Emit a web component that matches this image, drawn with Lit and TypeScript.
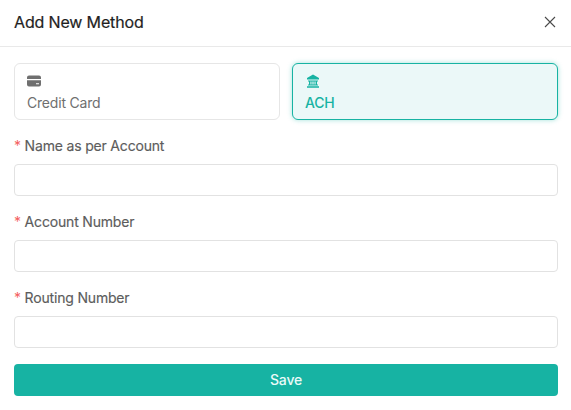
import { LitElement, html, css } from "lit";
import { customElement } from "lit/decorators.js";

@customElement("app-root")
export class AppRoot extends LitElement {
  static styles = css`
    :host {
      display: block;
      width: 571px;
      height: 410px;
      background: #fff;
      font-family: Inter, "Liberation Sans", sans-serif;
      box-sizing: border-box;
    }
    .header {
      height: 47px;
      box-sizing: border-box;
      border-bottom: 1px solid #e9e9e9;
      padding: 0 14px 3px;
      display: flex;
      align-items: center;
      justify-content: space-between;
    }
    .title { font-size: 16px; font-weight: 400; color: #1f1f1f; letter-spacing: -0.15px; -webkit-text-stroke: 0.2px #1f1f1f; }
    .close { width: 14px; height: 14px; color: #4a4a4a; display: block; margin-top: 1px; }
    .body { padding: 16px 13px 0 14px; display: flex; flex-direction: column; }
    .methods { display: grid; grid-template-columns: 1fr 1fr; gap: 12px; margin-bottom: 15px; }
    .method {
      height: 57px;
      box-sizing: border-box;
      border: 1px solid #e6e6e6;
      border-radius: 6px;
      padding: 10px 12px 0;
      color: #6f6f6f;
      font-size: 14px;
      line-height: 20px;
      letter-spacing: -0.2px;
    }
    .method.active {
      border-color: #17b3a3;
      background: #ebf8f8;
      color: #17b3a3;
      font-weight: 500;
      box-shadow: 0 0 5px rgba(23, 179, 163, 0.4);
    }
    .method svg { display: block; width: 14px; height: 14px; margin-bottom: 5px; }
    .method.active svg { margin-left: 1px; }
    .field { display: flex; flex-direction: column; margin-bottom: 15px; }
    .field.last { margin-bottom: 16px; }
    label {
      height: 22px;
      line-height: 22px;
      font-size: 14px;
      font-weight: 400;
      color: #5c5c5c;
      margin-bottom: 7px;
      display: block;
      letter-spacing: -0.18px;
      -webkit-text-stroke: 0.15px #5c5c5c;
    }
    .req { color: #f4605f; -webkit-text-stroke: 0; }
    input {
      height: 32px;
      box-sizing: border-box;
      border: 1px solid #e2e2e2;
      border-radius: 4px;
      background: #fff;
      outline: none;
      padding: 0 10px;
      display: block;
      width: 100%;
    }
    .save {
      height: 32px;
      border: none;
      border-radius: 4px;
      background: #17b3a3;
      color: #eafaf8;
      font: 500 14px Inter, "Liberation Sans", sans-serif;
      letter-spacing: -0.2px;
      padding: 0 0 1px;
    }
  `;

  render() {
    const fields = ["Name as per Account", "Account Number", "Routing Number"];
    return html`
      <div class="header">
        <span class="title">Add New Method</span>
        <svg class="close" viewBox="0 0 14 14" fill="none" stroke="currentColor" stroke-width="1.1">
          <path d="M2 2 L12 12 M12 2 L2 12" />
        </svg>
      </div>
      <div class="body">
        <div class="methods">
          <div class="method">
            <svg viewBox="0 0 14 14" fill="currentColor">
              <path fill-rule="evenodd" d="M2 1.5h10a2 2 0 0 1 2 2V5H0V3.5a2 2 0 0 1 2-2ZM0 6.3h14v4.2a2 2 0 0 1-2 2H2a2 2 0 0 1-2-2V6.3Zm9 3v1h3v-1H9Z" />
            </svg>
            Credit Card
          </div>
          <div class="method active">
            <svg viewBox="0 0 14 14" fill="currentColor">
              <path fill-rule="evenodd" d="M7 .5 13 4v1.6H1V4L7 .5ZM2 6.6h10v1H11v3h1v1H2v-1h1v-3H2v-1Zm2.4 1v3h1.1v-3H4.4Zm2 0v3h1.2v-3H6.4Zm2.1 0v3h1.1v-3H8.5ZM1 12.3h12v1.4H1v-1.4Z" />
            </svg>
            ACH
          </div>
        </div>
        ${fields.map(
          (f, i) => html`
            <div class="field ${i === fields.length - 1 ? "last" : ""}">
              <label><span class="req">*</span> ${f}</label>
              <input type="text" />
            </div>
          `
        )}
        <button class="save">Save</button>
      </div>
    `;
  }
}
